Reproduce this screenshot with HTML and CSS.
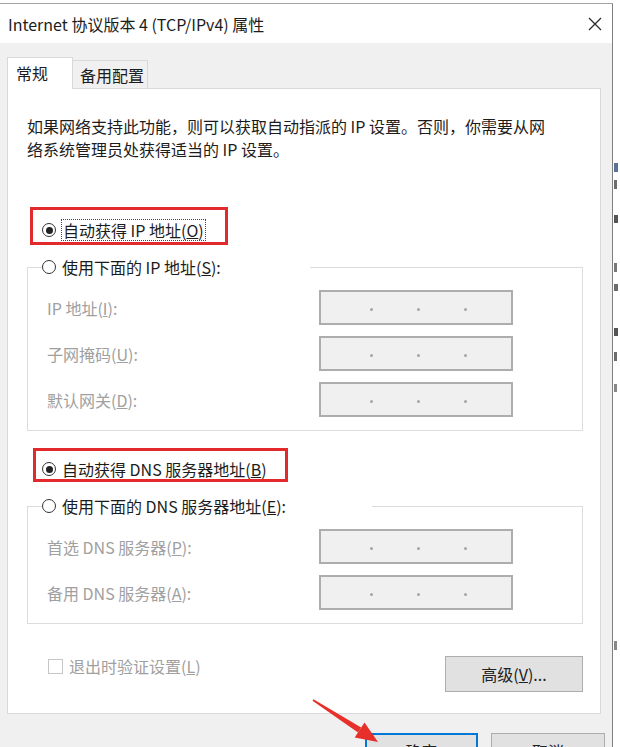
FILE: index.html
```html
<!DOCTYPE html>
<html lang="zh-CN"><head>
<meta charset="utf-8">
<title>Internet 协议版本 4 (TCP/IPv4) 属性</title>
<link rel="stylesheet" href="styles.css">
</head><body>
<div class="screen">
<div class="dialog">
	<div class="titlebar">
		<span class="title">Internet 协议版本 4 (TCP/IPv4) 属性</span>
		<svg class="close" width="14" height="14" viewBox="0 0 14 14"><path d="M1,1 L13,13 M13,1 L1,13" stroke="#2b2b2b" stroke-width="1.3" fill="none"/></svg>
	</div>
	<div class="dialog-body">
		<div class="tabs">
			<div class="tab active">常规</div>
			<div class="tab plain">备用配置</div>
		</div>
		<div class="panel">
			<p class="intro">如果网络支持此功能，则可以获取自动指派的 IP 设置。否则，你需要从网<br>络系统管理员处获得适当的 IP 设置。</p>

			<div class="option auto"><span class="radio on"></span><span class="focus">自动获得 IP 地址(<u>O</u>)</span></div>
			<fieldset class="group">
				<legend class="legend-ip"><div class="option"><span class="radio"></span><span>使用下面的 IP 地址(<u>S</u>):</span></div></legend>
				<div class="field"><label>IP 地址(<u>I</u>):</label><div class="ip"><i></i><i></i><i></i></div></div>
				<div class="field"><label>子网掩码(<u>U</u>):</label><div class="ip"><i></i><i></i><i></i></div></div>
				<div class="field"><label>默认网关(<u>D</u>):</label><div class="ip"><i></i><i></i><i></i></div></div>
			</fieldset>

			<div class="option auto dns"><span class="radio on"></span><span>自动获得 DNS 服务器地址(<u>B</u>)</span></div>
			<fieldset class="group">
				<legend class="legend-dns"><div class="option"><span class="radio"></span><span>使用下面的 DNS 服务器地址(<u>E</u>):</span></div></legend>
				<div class="field"><label>首选 DNS 服务器(<u>P</u>):</label><div class="ip"><i></i><i></i><i></i></div></div>
				<div class="field"><label>备用 DNS 服务器(<u>A</u>):</label><div class="ip"><i></i><i></i><i></i></div></div>
			</fieldset>

			<div class="footer">
				<div class="check"><span class="box"></span><span>退出时验证设置(<u>L</u>)</span></div>
				<button class="btn">高级(<u>V</u>)...</button>
			</div>

			<div class="mark mark-ip"></div>
			<div class="mark mark-dns"></div>
		</div>
		<div class="actions">
			<button class="btn wide primary">确定</button>
			<button class="btn wide">取消</button>
		</div>
	</div>
</div>
<!-- edge of the window behind the dialog -->
<svg class="behind" width="7" height="744" viewBox="0 0 7 744">
	<rect x="1" y="160" width="4" height="9" fill="#5a7394"/>
	<rect x="1" y="177" width="3" height="9" fill="#6c6c6c"/>
	<rect x="1" y="212" width="4" height="8" fill="#555"/>
	<rect x="1" y="260" width="3" height="9" fill="#777"/>
	<rect x="1" y="281" width="4" height="7" fill="#6c6c6c"/>
	<rect x="1" y="325" width="4" height="8" fill="#555"/>
	<rect x="1" y="349" width="3" height="9" fill="#6c6c6c"/>
	<rect x="1" y="381" width="3" height="8" fill="#888"/>
	<rect x="1" y="638" width="3" height="9" fill="#888"/>
</svg>
<svg class="arrow" width="620" height="747" viewBox="0 0 620 747">
	<polygon points="312.5,700.8 313.5,699.2 361.2,727.4 358,732.4" fill="#e8302a"/>
	<polygon points="354.7,737.4 364.5,722.4 378,742" fill="#e8302a"/>
</svg>
</div>
</body></html>
```
FILE: styles.css
```css
body {
	margin: 0;
	background: #fff;
	font-family: "Noto Sans CJK SC", "Noto Sans", sans-serif;
	font-size: 16px;
	color: #1c1c1c;
}

.screen {
	position: relative;
	display: flex;
	height: 747px;
	padding-top: 3px;
	box-sizing: border-box;
	overflow: hidden;
}

.dialog {
	flex: none;
	width: 612px;
	border-top: 1px solid #a6a6a6;
	border-right: 1px solid #7f7f7f;
	background: #f0f0f0;
}

.titlebar {
	display: flex;
	align-items: center;
	justify-content: space-between;
	height: 39px;
	padding: 0 10px 0 8px;
	background: #fff;
}

.title {
	line-height: 22px;
}

.dialog-body {
	padding: 14px 11px 0 7px;
}

.tabs {
	position: relative;
	z-index: 1;
	display: flex;
	align-items: flex-end;
	height: 32px;
	margin-bottom: -1px;
}

.tab {
	box-sizing: border-box;
	border: 1px solid #d9d9d9;
	border-bottom: 0;
	line-height: 22px;
}

.tab.active {
	width: 66px;
	height: 32px;
	padding: 4px 0 0 8px;
	background: #fff;
}

.tab.plain {
	width: 75px;
	height: 28px;
	margin-bottom: 1px;
	padding: 3px 0 0 7px;
	border-left: 0;
}

.panel {
	position: relative;
	padding: 26px 17px 21px 19px;
	border: 1px solid #d9d9d9;
	background: #fff;
}

.intro {
	margin: 0;
	line-height: 23px;
	white-space: nowrap;
}

.option {
	display: flex;
	align-items: center;
	gap: 6px;
	height: 24px;
	white-space: nowrap;
}

.option.auto {
	margin: 57px 0 0 15px;
}

.option.dns {
	margin-top: 26px;
}

.radio {
	flex: none;
	display: flex;
	align-items: center;
	justify-content: center;
	width: 14px;
	height: 14px;
	box-sizing: border-box;
	border: 1px solid #333;
	border-radius: 50%;
	background: #fff;
}

.radio.on::after {
	content: "";
	width: 7px;
	height: 7px;
	border-radius: 50%;
	background: #222;
}

.focus {
	padding: 0 1px;
	outline: 1px dotted #444;
	line-height: 20px;
}

.group {
	margin: 13px 0 0;
	padding: 11px 0 13px;
	border: 1px solid #dcdcdc;
	min-width: 0;
}

.group legend {
	margin-left: 14px;
	padding: 0;
}

.legend-ip {
	width: 268px;
}

.legend-dns {
	width: 330px;
}

.field {
	display: flex;
	align-items: center;
	height: 35px;
	padding-left: 19px;
	color: #a0a0a0;
}

.field + .field {
	margin-top: 11px;
}

.field label {
	width: 272px;
}

.ip {
	display: flex;
	align-items: center;
	gap: 44px;
	width: 194px;
	height: 35px;
	box-sizing: border-box;
	padding: 4px 0 0 49px;
	border: 2px solid #adadad;
	background: #f0f0f0;
}

.ip i {
	width: 3px;
	height: 3px;
	border-radius: 50%;
	background: #a4a4a4;
}

.footer {
	display: flex;
	align-items: flex-start;
	justify-content: space-between;
	margin-top: 32px;
}

.check {
	display: flex;
	align-items: center;
	gap: 6px;
	height: 20px;
	margin-left: 21px;
	color: #a0a0a0;
}

.box {
	width: 15px;
	height: 15px;
	box-sizing: border-box;
	border: 1px solid #c6c6c6;
	background: #fff;
}

.btn {
	width: 138px;
	height: 36px;
	padding: 0;
	border: 1px solid #adadad;
	background: #e1e1e1;
	color: #222;
	font: inherit;
}

.btn.wide {
	width: 114px;
}

.btn.primary {
	width: 113px;
	border: 2px solid #0078d7;
}

.actions {
	display: flex;
	justify-content: flex-end;
	gap: 13px;
	margin: 19px -4px 0 0;
}

.mark {
	position: absolute;
	box-sizing: border-box;
	border: 3px solid #e2292b;
}

.mark-ip {
	left: 22px;
	top: 118px;
	width: 198px;
	height: 38px;
}

.mark-dns {
	left: 25px;
	top: 359px;
	width: 255px;
	height: 34px;
}

.behind {
	flex: none;
	background: #fff;
}

.arrow {
	position: absolute;
	left: 0;
	top: 0;
	pointer-events: none;
}
```
